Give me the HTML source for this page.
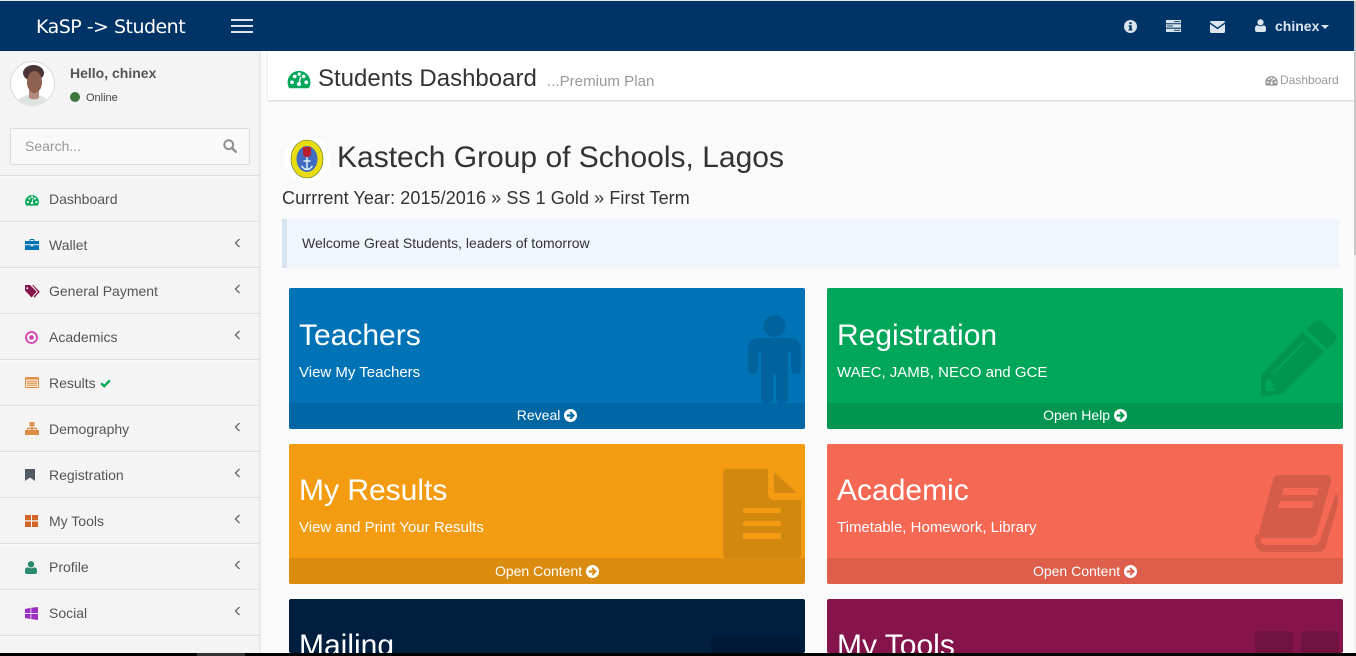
<!DOCTYPE html>
<html><head><meta charset="utf-8"><title>Students Dashboard</title>
<style>
*{box-sizing:border-box}
html,body{margin:0;padding:0;width:1356px;height:656px;overflow:hidden;background:#fafafa;font-family:"Liberation Sans",sans-serif;color:#333}
#wrap{position:relative;width:1356px;height:656px;overflow:hidden}
.a{position:absolute;white-space:nowrap}
svg{position:absolute;display:block;overflow:visible}
.side{position:absolute;left:0;top:51px;width:259px;height:602px;background:#f4f4f4;box-shadow:1px 0 2px rgba(0,0,0,.14)}
.sep{position:absolute;left:0;width:259px;height:2px;background:#dfdfdf;border-bottom:1px solid #f9f9f9}
.mi{position:absolute;left:49px;font-size:14px;line-height:20px;color:#555;white-space:nowrap}
.card{position:absolute;width:516px;border-radius:2px;overflow:hidden;color:#fff}
.card h3{position:absolute;left:10px;top:29px;margin:0;font-size:30px;font-weight:400;line-height:38px;white-space:nowrap}
.card p{position:absolute;left:10px;top:75px;margin:0;font-size:15px;line-height:20px;white-space:nowrap}
.foot{position:absolute;left:0;right:0;top:115px;height:26px;background:rgba(0,0,0,.1);text-align:center;font-size:14px;line-height:25px}
.foot svg{position:static;display:inline-block;vertical-align:-2px;width:13px;height:13px}
.r2 h3{top:28px}.r2 p{top:74px}.r2 .foot{top:114px;line-height:27px}
</style></head><body><div id="wrap">
<svg width="0" height="0" style="position:absolute">
<defs>
<symbol id="tach" viewBox="0 0 16 14"><path fill-rule="evenodd" fill="currentColor" d="M1.2 13.5C.4 12.3 0 10.800 0 9.300A8 8 0 0 1 16 9.300C16 10.800 15.600 12.300 14.800 13.500ZM1.800 9.300a1.300 1.300 0 1 0 2.600 0a1.300 1.300 0 1 0-2.600 0ZM3.700 5.200a1.300 1.300 0 1 0 2.600 0a1.300 1.300 0 1 0-2.600 0ZM6.900 3.600a1.200 1.200 0 1 0 2.400 0a1.200 1.200 0 1 0-2.400 0ZM10 5.200a1.300 1.300 0 1 0 2.600 0a1.300 1.300 0 1 0-2.600 0ZM11.800 9.300a1.300 1.300 0 1 0 2.600 0a1.300 1.300 0 1 0-2.600 0ZM6.500 10.500a1.500 1.500 0 0 0 3 0c0-.6-.3-1.100-.7-1.300L9.600 5.500 8.700 5.300 7.700 9.100C7 9.300 6.500 9.800 6.500 10.500Z"/></symbol>
<symbol id="arr" viewBox="0 0 14 14"><path fill-rule="evenodd" fill="currentColor" d="M7 0a7 7 0 1 1 0 14a7 7 0 0 1 0-14ZM7.300 2.600 5.900 4 7.800 5.800H3V8.200H7.800L5.900 10 7.300 11.400 11.700 7Z"/></symbol>
<symbol id="chev" viewBox="0 0 7 10"><path d="M5.500 1L1.500 5 5.500 9" fill="none" stroke="#666" stroke-width="1.300"/></symbol>
</defs></svg>

<!-- header -->
<div class="a" style="left:0;top:0;width:1354px;height:1px;background:#dfe6ec"></div>
<div class="a" style="left:0;top:1px;width:1354px;height:50px;background:#003366"></div>
<div class="a" style="left:36px;top:14px;font-family:'DejaVu Sans',sans-serif;font-size:19px;line-height:26px;color:#fff;letter-spacing:-.52px">KaSP -&gt; Student</div>
<div class="a" style="left:231px;top:19px;width:22px;height:2px;background:#dbe5ee"></div>
<div class="a" style="left:231px;top:25px;width:22px;height:2px;background:#dbe5ee"></div>
<div class="a" style="left:231px;top:31px;width:22px;height:2px;background:#dbe5ee"></div>
<svg style="left:1124px;top:20px" width="13" height="13" viewBox="0 0 13 13"><path fill-rule="evenodd" fill="#dbe5ee" d="M6.500 0a6.500 6.500 0 1 1 0 13a6.500 6.500 0 0 1 0-13ZM5.300 2.200V4.100H7.700V2.200ZM4.600 5.200V6.400H5.300V9.300H4.600V10.500H8.400V9.300H7.700V5.200Z"/></svg>
<svg style="left:1166px;top:20px" width="15" height="12" viewBox="0 0 15 12"><path fill="#dbe5ee" d="M0 0H15V3.300H0ZM0 4.300H15V7.600H0ZM0 8.700H15V12H0Z"/><path fill="#003366" d="M8 1.200H14V2.100H8ZM1 5.500H7V6.400H1ZM8 9.900H14V10.800H8Z"/></svg>
<svg style="left:1210px;top:21px" width="15" height="12" viewBox="0 0 15 12"><path fill="#dbe5ee" d="M0 1.200Q0 0 1.200 0H13.800Q15 0 15 1.200L7.500 6.500ZM0 3V10.800Q0 12 1.200 12H13.800Q15 12 15 10.800V3L7.500 8.200Z"/></svg>
<svg style="left:1255px;top:19px" width="11" height="13" viewBox="0 0 11 13"><circle cx="5.500" cy="3.300" r="3.100" fill="#dbe5ee"/><path fill="#dbe5ee" d="M0 11V9.500Q0 6.800 2.300 6.300Q5.500 8.300 8.700 6.300Q11 6.800 11 9.500V11Q11 13 9 13H2Q0 13 0 11Z"/></svg>
<div class="a" style="left:1275px;top:17px;font-size:14px;font-weight:700;line-height:18px;color:#dbe5ee">chinex</div>
<svg style="left:1321px;top:25px" width="8" height="4" viewBox="0 0 8 4"><path fill="#dbe5ee" d="M0 0H8L4 4Z"/></svg>

<!-- sidebar -->
<div class="side"></div>
<svg style="left:10px;top:61px" width="45" height="45" viewBox="0 0 45 45">
<defs><clipPath id="av"><circle cx="22.500" cy="22.500" r="21.500"/></clipPath></defs>
<circle cx="22.500" cy="22.500" r="22" fill="#fff" stroke="#dcdcdc"/>
<g clip-path="url(#av)"><path d="M6 45Q7 36 18 34H28Q38 36 39 45Z" fill="#dfe3df"/><path d="M19 28H29V37Q24 40 19 37Z" fill="#b08a7c"/><ellipse cx="23.500" cy="12" rx="10.500" ry="8" fill="#4a3436"/><ellipse cx="24.500" cy="21" rx="7.500" ry="11" fill="#8f5f52"/></g></svg>
<div class="a" style="left:70px;top:64px;font-size:14px;font-weight:700;line-height:18px;color:#555">Hello, chinex</div>
<div class="a" style="left:70px;top:92px;width:10px;height:10px;border-radius:50%;background:#3c763d"></div>
<div class="a" style="left:86px;top:91px;font-size:11px;line-height:14px;color:#444">Online</div>
<div class="a" style="left:10px;top:128px;width:240px;height:37px;background:#f9f9f9;border:1px solid #dcdcdc;border-radius:2px"></div>
<div class="a" style="left:25px;top:137px;font-size:14px;line-height:18px;color:#999">Search...</div>
<svg style="left:223px;top:139px" width="14" height="14" viewBox="0 0 14 14"><circle cx="5.700" cy="5.700" r="4.400" fill="none" stroke="#8f8f8f" stroke-width="2"/><path d="M9 9L12.800 12.800" stroke="#8f8f8f" stroke-width="2.400" stroke-linecap="round"/></svg>

<div class="sep" style="top:175px"></div><div class="sep" style="top:221px"></div><div class="sep" style="top:267px"></div><div class="sep" style="top:313px"></div><div class="sep" style="top:359px"></div><div class="sep" style="top:405px"></div><div class="sep" style="top:451px"></div><div class="sep" style="top:497px"></div><div class="sep" style="top:543px"></div><div class="sep" style="top:589px"></div><div class="sep" style="top:635px"></div>

<div class="mi" style="top:189px">Dashboard</div>
<div class="mi" style="top:235px">Wallet</div>
<div class="mi" style="top:281px">General Payment</div>
<div class="mi" style="top:327px">Academics</div>
<div class="mi" style="top:373px">Results</div>
<div class="mi" style="top:419px">Demography</div>
<div class="mi" style="top:465px">Registration</div>
<div class="mi" style="top:511px">My Tools</div>
<div class="mi" style="top:557px">Profile</div>
<div class="mi" style="top:603px">Social</div>

<svg style="left:25px;top:194px;color:#00a65a" width="14" height="12"><use href="#tach"/></svg>
<svg style="left:25px;top:239px" width="14" height="11" viewBox="0 0 14 11"><path fill="#0073b7" d="M4.500 2V.8Q4.500 0 5.300 0H8.700Q9.500 0 9.500.8V2H14V5.300H0V2ZM5.500 2H8.500V1H5.500ZM0 6.200H5.800V7.400H8.200V6.200H14V11H0Z"/></svg>
<svg style="left:25px;top:285px" width="15" height="13" viewBox="0 0 15 13"><path fill="#85144b" d="M0 0H5L11.600 6.600 6.500 12.500 0 5.500ZM2.200 2.200a1 1 0 1 0 .1 0Z"/><path fill="#85144b" d="M7 0H8.200L14.800 6.700 9.500 12.600 8.500 11.800 12.900 6.700Z"/></svg>
<svg style="left:25px;top:331px" width="13" height="13" viewBox="0 0 13 13"><circle cx="6.500" cy="6.500" r="5.500" fill="none" stroke="#d13fb0" stroke-width="1.800"/><circle cx="6.500" cy="6.500" r="2.300" fill="#d13fb0"/></svg>
<svg style="left:25px;top:377px" width="14" height="11" viewBox="0 0 14 11"><rect width="14" height="11" rx="1" fill="#e08e45"/><rect x="1" y="2.500" width="12" height="7.500" fill="#fbe9d4"/><path stroke="#e08e45" d="M2 4.300H12M2 6.200H12M2 8.100H12"/></svg>
<svg style="left:100px;top:379px" width="11" height="9" viewBox="0 0 11 9"><path d="M1.200 4.300L4.200 7.200 9.800 1.400" fill="none" stroke="#00a65a" stroke-width="2.400"/></svg>
<svg style="left:25px;top:422px" width="14" height="13" viewBox="0 0 14 13"><path fill="#e08e45" d="M4.500 0H9.500V4.200H7.700V5.800H12V8H14V13H9.300V8H11V7H7.700V8H9.400V13H4.600V8H6.300V7H3V8H4.700V13H0V8H2V5.800H6.300V4.200H4.500Z"/></svg>
<svg style="left:25px;top:469px" width="10" height="12" viewBox="0 0 10 12"><path fill="#505a64" d="M0 0H10V12L5 8.500 0 12Z"/></svg>
<svg style="left:25px;top:515px" width="13" height="12" viewBox="0 0 13 12"><path fill="#d2642a" d="M0 0H6V5.300H0ZM7 0H13V5.300H7ZM0 6.500H6V12H0ZM7 6.500H13V12H7Z"/></svg>
<svg style="left:25px;top:561px" width="12" height="13" viewBox="0 0 12 13"><circle cx="6" cy="3.300" r="3.200" fill="#2a8a70"/><path fill="#2a8a70" d="M0 11V9.500Q0 6.800 2.500 6.300Q6 8.300 9.500 6.300Q12 6.800 12 9.500V11Q12 13 10 13H2Q0 13 0 11Z"/></svg>
<svg style="left:25px;top:607px" width="13" height="13" viewBox="0 0 13 13"><path fill="#9b2fc0" d="M0 2L5.500.9V6H0ZM6.300.8L13 0V6H6.300ZM0 6.900H5.500V12L0 11ZM6.300 6.900H13V13L6.300 12.100Z"/></svg>

<svg style="left:234px;top:238px" width="7" height="10"><use href="#chev"/></svg>
<svg style="left:234px;top:284px" width="7" height="10"><use href="#chev"/></svg>
<svg style="left:234px;top:330px" width="7" height="10"><use href="#chev"/></svg>
<svg style="left:234px;top:422px" width="7" height="10"><use href="#chev"/></svg>
<svg style="left:234px;top:468px" width="7" height="10"><use href="#chev"/></svg>
<svg style="left:234px;top:514px" width="7" height="10"><use href="#chev"/></svg>
<svg style="left:234px;top:560px" width="7" height="10"><use href="#chev"/></svg>
<svg style="left:234px;top:606px" width="7" height="10"><use href="#chev"/></svg>

<!-- content header -->
<div class="a" style="left:268px;top:51px;width:1086px;height:49px;background:#fff;box-shadow:0 1px 2px rgba(0,0,0,.16)"></div>
<svg style="left:287px;top:69px;color:#00a65a" width="24" height="20"><use href="#tach"/></svg>
<div class="a" style="left:318px;top:64px;font-size:24px;line-height:29px;color:#333">Students Dashboard</div>
<div class="a" style="left:547px;top:73px;font-size:15.100px;line-height:18px;color:#999">...Premium Plan</div>
<svg style="left:1265px;top:75px;color:#999" width="13" height="11"><use href="#tach"/></svg>
<div class="a" style="left:1280px;top:72px;font-size:12px;line-height:16px;color:#999">Dashboard</div>

<!-- school -->
<svg style="left:283px;top:135px" width="48" height="48" viewBox="0 0 48 48"><circle cx="24" cy="24" r="23" fill="#fff"/><ellipse cx="24" cy="24" rx="16" ry="19" fill="#e9dc10" stroke="#5a6a30" stroke-width=".6"/><ellipse cx="24" cy="24" rx="10.500" ry="13" fill="#3f6cc0"/><path d="M20 12H28V20L24 23 20 20Z" fill="#b81f30"/><path d="M24 22V35M20.500 26H27.500M18.500 31Q24 38 29.500 31" fill="none" stroke="#dff0f5" stroke-width="1.500"/></svg>
<div class="a" style="left:337px;top:140px;font-size:30px;line-height:36px;color:#333">Kastech Group of Schools, Lagos</div>
<div class="a" style="left:282px;top:187px;font-size:18px;line-height:22px;color:#333;letter-spacing:.08px">Currrent Year: 2015/2016 » SS 1 Gold » First Term</div>
<div class="a" style="left:282px;top:219px;width:1057px;height:49px;background:#eff6fd;border-left:5px solid #d6e4f2"></div>
<div class="a" style="left:302px;top:234px;font-size:14px;line-height:18px;color:#333">Welcome Great Students, leaders of tomorrow</div>

<!-- cards -->
<div class="card" style="left:289px;top:288px;height:141px;background:#0073b7">
<svg style="left:459px;top:27px" width="53" height="88" viewBox="0 0 53 88"><g fill="#00639e"><circle cx="26.500" cy="11" r="11"/><path d="M12 23H41Q53 23 53 35V54Q53 59 48 59Q43 59 43 54V37H40V82Q40 88 34 88Q28 88 28 82V60H25V82Q25 88 19 88Q13 88 13 82V37H10V54Q10 59 5 59Q0 59 0 54V35Q0 23 12 23Z"/></g></svg>
<h3>Teachers</h3><p>View My Teachers</p>
<div class="foot">Reveal <svg style="color:#fff"><use href="#arr"/></svg></div></div>

<div class="card" style="left:827px;top:288px;height:141px;background:#00a65a">
<svg style="left:433px;top:31px" width="78" height="78" viewBox="0 0 78 78"><g fill="#00964f"><path d="M53 4Q58-1 63 3L74 14Q79 19 74 24L67 30 46 10Z"/><path fill-rule="evenodd" d="M43 13 64 33 22 75 1 77.500 1 56ZM43.500 22.500 12.500 54 13.800 55.300 44.800 23.800ZM6 62 6 72 16 72 12 68 14 65 9 60Z"/></g></svg>
<h3>Registration</h3><p>WAEC, JAMB, NECO and GCE</p>
<div class="foot">Open Help <svg style="color:#fff"><use href="#arr"/></svg></div></div>

<div class="card r2" style="left:289px;top:444px;height:140px;background:#f39c12">
<svg style="left:434px;top:25px" width="78" height="89" viewBox="0 0 78 89"><g fill="#d2880f"><path fill-rule="evenodd" d="M4 0H45V24Q45 31 52 31H78V85Q78 89 74 89H4Q0 89 0 85V4Q0 0 4 0ZM22 39Q20 39 20 41V42Q20 44 22 44H56Q58 44 58 42V41Q58 39 56 39ZM22 52Q20 52 20 54V55Q20 57 22 57H56Q58 57 58 55V54Q58 52 56 52ZM22 64Q20 64 20 66V68Q20 70 22 70H56Q58 70 58 68V66Q58 64 56 64Z"/><path d="M51 3 74 24H51Z"/></g></svg>
<h3>My Results</h3><p>View and Print Your Results</p>
<div class="foot">Open Content <svg style="color:#fff"><use href="#arr"/></svg></div></div>

<div class="card r2" style="left:827px;top:444px;height:140px;background:#f56954">
<svg style="left:427px;top:30px" width="85" height="78" viewBox="0 0 85 78"><g fill="#d65c4a"><path fill-rule="evenodd" d="M24 1H72Q78 1 77 8L63 58Q61 64 55 64H10Q4 64 5 58L19 6Q20 1 24 1ZM30 14 28 21H63L65 14ZM26 27 24 34H58L60 27Z"/><path d="M2 60Q0 64 1 70Q4 78 12 78H64Q70 78 72 72L84 30Q85 24 82 19L66 66Q64 71 60 71H14Q8 71 7 67 6 64 7 62Z"/></g></svg>
<h3>Academic</h3><p>Timetable, Homework, Library</p>
<div class="foot">Open Content <svg style="color:#fff"><use href="#arr"/></svg></div></div>

<div class="card r2" style="left:289px;top:599px;height:54px;background:#001f3f">
<svg style="left:422px;top:38px" width="90" height="30" viewBox="0 0 90 30"><rect width="90" height="30" rx="5" fill="#001a35"/></svg>
<h3>Mailing</h3></div>

<div class="card r2" style="left:827px;top:599px;height:54px;background:#85144b">
<svg style="left:428px;top:32px" width="84" height="30" viewBox="0 0 84 30"><rect width="38" height="30" rx="5" fill="#721240"/><rect x="46" width="38" height="30" rx="5" fill="#721240"/></svg>
<h3>My Tools</h3></div>

<!-- edge bars -->
<div class="a" style="left:1354px;top:0;width:2px;height:653px;background:#f1f1f1"></div>
<div class="a" style="left:1354px;top:1px;width:2px;height:254px;background:#c8c8c8"></div>
<div class="a" style="left:0;top:653px;width:1356px;height:3px;background:#000"></div>
<div class="a" style="left:197px;top:653px;width:48px;height:3px;background:#333"></div>
</div></body></html>
